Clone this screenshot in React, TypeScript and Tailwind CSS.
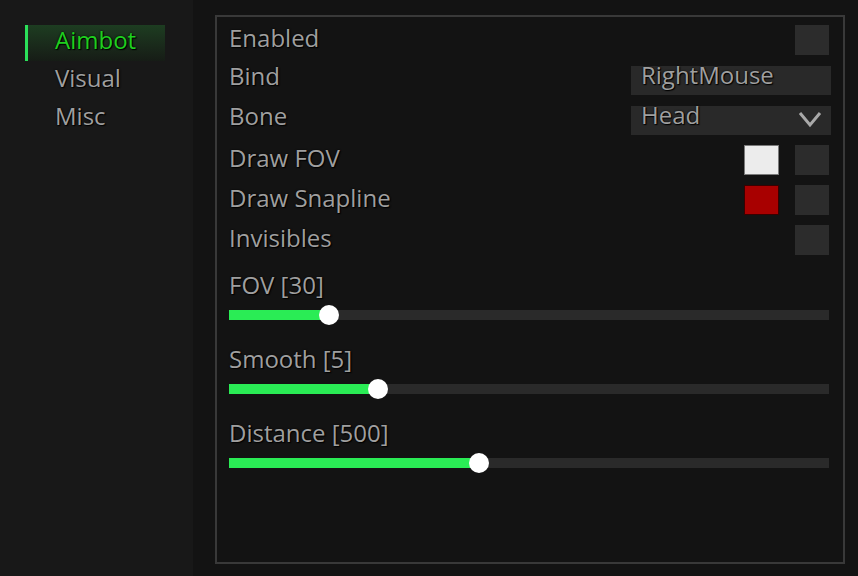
import React from 'react';

const font = { fontFamily: '"Open Sans", "Liberation Sans", sans-serif' };

const txt = 'text-[24px] leading-none text-[#9f9f9f] [text-shadow:0_0_2px_#000,1px_1px_1px_#000]';

const Checkbox: React.FC = () => <div className="w-[34px] h-[30px] mr-[2px] bg-[#2c2c2c]" />;

const Row: React.FC<{ label: string; lift?: string; children?: React.ReactNode }> = ({ label, lift = 'pb-[4px]', children }) => (
  <div className="flex items-center justify-between h-[30px] mb-[10px]">
    <span className={`${txt} ${lift}`}>{label}</span>
    <div className="flex items-center">{children}</div>
  </div>
);

const Slider: React.FC<{ label: string; pct: number }> = ({ label, pct }) => (
  <div className="mb-[26px]">
    <div className={`h-[28px] flex items-center pb-[2px] ${txt}`}>{label}</div>
    <div className="relative mt-[10px] h-[10px] w-[600px] bg-[#2a2a2a]">
      <div className="absolute left-0 top-0 h-full bg-[#2aec55]" style={{ width: `${pct * 600}px` }} />
      <div
        className="absolute top-[-5px] w-[20px] h-[20px] rounded-full bg-white"
        style={{ left: `${pct * 600 - 10}px` }}
      />
    </div>
  </div>
);

const App: React.FC = () => {
  return (
    <div className="flex w-[858px] h-[576px] bg-[#131313] overflow-hidden" style={font}>
      <aside className="w-[193px] bg-[#181818] pt-[25px] pl-[25px]">
        <div className="w-[140px] h-[36px] flex items-center border-l-[3px] border-[#2be05a] bg-gradient-to-b from-[#1d3d21] to-[#161c16] pl-[27px] pb-[7px]">
          <span className="text-[24px] leading-none text-[#1fcf1f] [text-shadow:0_0_2px_#000,1px_1px_1px_#000]">Aimbot</span>
        </div>
        <div className="w-[140px] h-[38px] flex items-center pl-[30px] pb-[4px]">
          <span className={txt}>Visual</span>
        </div>
        <div className="w-[140px] h-[38px] flex items-center pl-[30px] pb-[4px]">
          <span className={txt}>Misc</span>
        </div>
      </aside>

      <main className="flex-1 pl-[22px] pt-[15px]">
        <div className="w-[630px] h-[549px] border-2 border-[#393939] bg-[#131313] px-[12px] pt-[8px]">
          <Row label="Enabled">
            <Checkbox />
          </Row>
          <Row label="Bind" lift="pb-[8px]">
            <div className={`w-[200px] h-[29px] bg-[#292929] flex items-center pl-[10px] pb-[11px] ${txt}`}>
              RightMouse
            </div>
          </Row>
          <Row label="Bone" lift="pb-[8px]">
            <div className={`w-[200px] h-[29px] bg-[#292929] flex items-center justify-between pl-[10px] pr-[9px] ${txt}`}>
              <span className="pb-[11px]">Head</span>
              <svg width="24" height="18" viewBox="0 0 24 18" fill="none" className="mb-[2px]">
                <path d="M2 3 L12 15 L22 3" stroke="#a9a9a9" strokeWidth="3" />
              </svg>
            </div>
          </Row>
          <Row label="Draw FOV">
            <div className="w-[35px] h-[30px] mr-[16px] bg-[#ececec] border border-[#7a7a7a]" />
            <Checkbox />
          </Row>
          <Row label="Draw Snapline">
            <div className="w-[35px] h-[30px] mr-[16px] bg-[#a80000] border border-[#3a0000]" />
            <Checkbox />
          </Row>
          <Row label="Invisibles">
            <Checkbox />
          </Row>
          <div className="mt-[17px]">
            <Slider label="FOV [30]" pct={100 / 600} />
            <Slider label="Smooth [5]" pct={149 / 600} />
            <Slider label="Distance [500]" pct={250 / 600} />
          </div>
        </div>
      </main>
    </div>
  );
};

export default App;
